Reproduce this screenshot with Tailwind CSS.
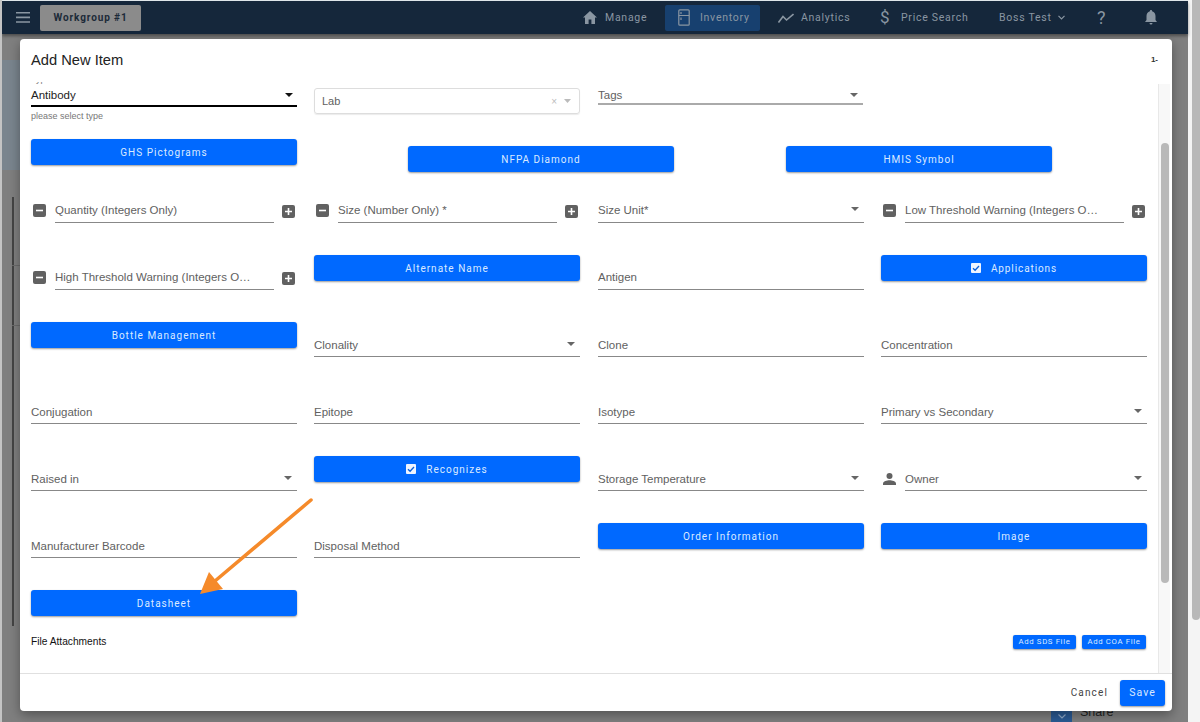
<!DOCTYPE html>
<html lang="en">
<head>
    <meta charset="UTF-8">
    <meta name="viewport" content="width=device-width, initial-scale=1.0">
    <script src="https://cdn.jsdelivr.net/npm/@tailwindcss/browser@4"></script>
    <title>Add New Item</title>
</head>
<body class="relative w-[1200px] h-[722px] overflow-hidden bg-[#f4f4f4] font-['Liberation_Sans',sans-serif]">

    <!-- Page behind the dialog, dimmed by the overlay -->
    <div class="absolute left-0 top-0 w-[1188px] h-[722px] bg-[#7f7f7f] pt-px">
        <nav class="ml-[2px] h-[33px] bg-[#15273b] shadow-[0_2px_3px_rgba(0,0,0,0.4)] flex items-center whitespace-nowrap font-['Roboto',sans-serif] text-[10.500px] tracking-[0.07em] text-[#8a96a2]">
            <svg class="ml-[14px] w-[14px] h-[11px]" viewBox="0 0 14 11"><path d="M0 0h14v1.600H0zM0 4.600h14v1.600H0zM0 9.200h14v1.600H0z" fill="#8a96a2"/></svg>
            <div class="ml-[10px] w-[101px] h-[26px] rounded-[2px] bg-[#8b8b8b] flex items-center justify-center font-bold text-[10px] tracking-[0.09em] text-[#1c2a38]">Workgroup #1</div>
            <svg class="ml-[442px] w-[14px] h-[13px]" viewBox="0 0 14 13"><path d="M7 0L0 6.500h2V13h3.600V8.600h2.800V13H12V6.500h2z" fill="#8a96a2"/></svg>
            <span class="ml-[8px] w-[44px]">Manage</span>
            <div class="ml-[16px] w-[95px] h-[26px] rounded-[2px] bg-[#17406f] flex items-center pl-[13px]">
                <svg class="w-[12px] h-[17px]" viewBox="0 0 12 17" fill="none" stroke="#8a96a2" stroke-width="1.200"><rect x="0.800" y="0.800" width="10.400" height="15.400" rx="1"/><path d="M0.800 6.500h10.400M3 3v2M3 8.500v2.500"/></svg>
                <span class="ml-[10px]">Inventory</span>
            </div>
            <svg class="ml-[18px] w-[16px] h-[10px]" viewBox="0 0 16 10" fill="none" stroke="#8a96a2" stroke-width="1.600"><path d="M0.500 9.500L5 3.500l3.500 3.500L15.500 1"/></svg>
            <span class="ml-[7px] w-[48px]">Analytics</span>
            <span class="ml-[31px] w-[11px] text-[17px] font-normal tracking-normal">$</span>
            <span class="ml-[10px] w-[70px]">Price Search</span>
            <span class="ml-[28px] w-[54px]">Boss Test</span>
            <svg class="ml-[5px] w-[7px] h-[5px]" viewBox="0 0 7 5" fill="none" stroke="#8a96a2" stroke-width="1.200"><path d="M0.500 0.800l3 3 3-3"/></svg>
            <span class="ml-[32px] w-[12px] text-[18px] tracking-normal">?</span>
            <svg class="ml-[36px] w-[12px] h-[15px]" viewBox="0 0 12 15"><path d="M6 0c.7 0 1.100.5 1.100 1.200C9.300 1.800 10.500 3.700 10.500 6v4L12 12H0l1.500-2V6c0-2.300 1.200-4.200 3.400-4.800C4.900.5 5.300 0 6 0zM4.500 13h3a1.500 1.500 0 0 1-3 0z" fill="#8a96a2"/></svg>
        </nav>
        <div class="absolute left-0 top-0 w-full h-px bg-[#dfe6ea]"></div>
        <div class="absolute left-0 top-0 w-[2px] h-[722px] bg-[#c4c4c4]"></div>
        <!-- Table borders showing to the left of the dialog -->
        <div class="absolute left-[12px] top-[197px] w-[2px] h-[429px] bg-[#444]"></div>
        <div class="absolute left-[12px] top-[265px] w-[8px] h-px bg-[#6a6a6a]"></div>
        <div class="absolute left-[12px] top-[325px] w-[8px] h-px bg-[#6a6a6a]"></div>
        <div class="absolute left-[2px] top-[60px] w-[18px] h-[110px] bg-[#7a858e]"></div>
        <div class="absolute left-[1051px] top-[711px] w-[21px] h-[11px] bg-[#2a5a94] flex justify-center pt-[3px]">
            <svg class="w-[8px] h-[5px]" viewBox="0 0 8 5" fill="none" stroke="#8fa9c8" stroke-width="1.200"><path d="M0.500 0.500l3.500 3.500 3.500-3.500"/></svg>
        </div>
        <span class="absolute left-[1080px] top-[703px] text-[12.500px] text-[#222]">Share</span>
    </div>

    <!-- Window scrollbar -->
    <div class="absolute left-[1192px] top-0 w-[8px] h-[620px] bg-[#b8b8b8] rounded-b"></div>

    <!-- Dialog -->
    <div class="absolute left-[20px] top-[39px] w-[1152px] h-[672px] bg-white rounded-[4px] shadow-[0_4px_12px_rgba(0,0,0,0.35)] flex flex-col text-[11.500px] text-[#616161]">
        <div class="h-[43px] pl-[11px] pr-[14px] pt-[12px] flex justify-between">
            <h2 class="text-[14.700px] leading-[18px] text-[#222]">Add New Item</h2>
            <span class="mt-[3px] text-[8px] font-bold text-[#333]">1-</span>
        </div>

        <div class="relative h-[591px] overflow-hidden pl-[11px]">
            <div class="w-[1116px]">
                <!-- First row -->
                <div class="grid grid-cols-[266px_266px_266px_266px] gap-x-[17px] h-[57px]">
                    <div class="relative">
                        <span class="absolute left-0 top-[-9px] text-[9px] leading-[12px] text-[#777]">Type</span>
                        <div class="h-[25px] border-b-2 border-black pt-[6px] leading-[14px] text-[#222]">Antibody</div>
                        <svg class="absolute right-[4px] top-[11px] w-[8px] h-[4px]" viewBox="0 0 8 4"><path d="M0 0h8L4 4z" fill="#111"/></svg>
                        <p class="mt-[3px] text-[9px] leading-[12px] text-[#777]">please select type</p>
                    </div>
                    <div class="mt-[6px] h-[26px] border border-[#ddd] rounded-[3px] shadow-[0_1px_1px_rgba(0,0,0,0.08)] flex items-center pl-[7px] pr-[8px] text-[11px]">
                        <span class="flex-1">Lab</span>
                        <span class="text-[10px] text-[#bbb]">×</span>
                        <svg class="ml-[7px] w-[7px] h-[4px]" viewBox="0 0 7 4"><path d="M0 0h7L3.500 4z" fill="#bbb"/></svg>
                    </div>
                    <div class="relative ml-px">
                        <div class="h-[23px] border-b-2 border-[#aaa] pt-[6px] leading-[14px]">Tags</div>
                        <svg class="absolute right-[5px] top-[11px] w-[8px] h-[4px]" viewBox="0 0 8 4"><path d="M0 0h8L4 4z" fill="#666"/></svg>
                    </div>
                </div>

                <!-- Pictogram buttons -->
                <div class="flex items-start h-[49px]">
                    <button class="w-[266px] h-[26px] rounded-[3px] bg-[#0069ff] shadow-[0_1px_2px_rgba(0,0,0,0.4)] text-[10px] tracking-[0.1em] text-[#dbe9ff] font-['Roboto',sans-serif]">GHS Pictograms</button>
                    <button class="ml-[111px] mt-[7px] w-[266px] h-[26px] rounded-[3px] bg-[#0069ff] shadow-[0_1px_2px_rgba(0,0,0,0.4)] text-[10px] tracking-[0.1em] text-[#dbe9ff] font-['Roboto',sans-serif]">NFPA Diamond</button>
                    <button class="ml-[112px] mt-[7px] w-[266px] h-[26px] rounded-[3px] bg-[#0069ff] shadow-[0_1px_2px_rgba(0,0,0,0.4)] text-[10px] tracking-[0.1em] text-[#dbe9ff] font-['Roboto',sans-serif]">HMIS Symbol</button>
                </div>

                <!-- Fields: columns start at 31, 314, 598 and 881 -->
                <div class="grid grid-cols-[266px_267px_266px_266px] gap-x-[17px] auto-rows-[67px]">
                    <!-- row: Quantity -->
                    <div class="flex items-start">
                        <svg class="mt-[16px] ml-[2px] w-[13px] h-[13px]" viewBox="0 0 13 13"><rect width="13" height="13" rx="2" fill="#616161"/><path d="M3 5.700h7v1.600H3z" fill="#fff"/></svg>
                        <div class="ml-[9px] w-[219px] h-[35px] border-b border-[#888] pt-[14px] leading-[16px]">Quantity (Integers Only)</div>
                        <svg class="mt-[17px] ml-[8px] w-[13px] h-[13px]" viewBox="0 0 13 13"><rect width="13" height="13" rx="2" fill="#616161"/><path d="M3 5.700h7v1.600H3zM5.700 3h1.600v7H5.700z" fill="#fff"/></svg>
                    </div>
                    <div class="flex items-start">
                        <svg class="mt-[16px] ml-[2px] w-[13px] h-[13px]" viewBox="0 0 13 13"><rect width="13" height="13" rx="2" fill="#616161"/><path d="M3 5.700h7v1.600H3z" fill="#fff"/></svg>
                        <div class="ml-[9px] w-[219px] h-[35px] border-b border-[#888] pt-[14px] leading-[16px]">Size (Number Only) *</div>
                        <svg class="mt-[17px] ml-[8px] w-[13px] h-[13px]" viewBox="0 0 13 13"><rect width="13" height="13" rx="2" fill="#616161"/><path d="M3 5.700h7v1.600H3zM5.700 3h1.600v7H5.700z" fill="#fff"/></svg>
                    </div>
                    <div class="relative h-[35px] border-b border-[#888] pt-[14px] leading-[16px]">Size Unit*
                        <svg class="absolute right-[5px] top-[19px] w-[8px] h-[4px]" viewBox="0 0 8 4"><path d="M0 0h8L4 4z" fill="#666"/></svg>
                    </div>
                    <div class="flex items-start">
                        <svg class="mt-[16px] ml-[2px] w-[13px] h-[13px]" viewBox="0 0 13 13"><rect width="13" height="13" rx="2" fill="#616161"/><path d="M3 5.700h7v1.600H3z" fill="#fff"/></svg>
                        <div class="ml-[9px] w-[219px] h-[35px] border-b border-[#888] pt-[14px] leading-[16px]">Low Threshold Warning (Integers O…</div>
                        <svg class="mt-[17px] ml-[8px] w-[13px] h-[13px]" viewBox="0 0 13 13"><rect width="13" height="13" rx="2" fill="#616161"/><path d="M3 5.700h7v1.600H3zM5.700 3h1.600v7H5.700z" fill="#fff"/></svg>
                    </div>

                    <!-- row: High Threshold -->
                    <div class="flex items-start">
                        <svg class="mt-[16px] ml-[2px] w-[13px] h-[13px]" viewBox="0 0 13 13"><rect width="13" height="13" rx="2" fill="#616161"/><path d="M3 5.700h7v1.600H3z" fill="#fff"/></svg>
                        <div class="ml-[9px] w-[219px] h-[35px] border-b border-[#888] pt-[14px] leading-[16px]">High Threshold Warning (Integers O…</div>
                        <svg class="mt-[17px] ml-[8px] w-[13px] h-[13px]" viewBox="0 0 13 13"><rect width="13" height="13" rx="2" fill="#616161"/><path d="M3 5.700h7v1.600H3zM5.700 3h1.600v7H5.700z" fill="#fff"/></svg>
                    </div>
                    <button class="w-[266px] h-[26px] rounded-[3px] bg-[#0069ff] shadow-[0_1px_2px_rgba(0,0,0,0.4)] text-[10px] tracking-[0.1em] text-[#dbe9ff] font-['Roboto',sans-serif]">Alternate Name</button>
                    <div class="h-[35px] border-b border-[#888] pt-[14px] leading-[16px]">Antigen</div>
                    <button class="h-[26px] rounded-[3px] bg-[#0069ff] shadow-[0_1px_2px_rgba(0,0,0,0.4)] text-[10px] tracking-[0.09em] text-[#dbe9ff] font-['Roboto',sans-serif] flex items-center justify-center gap-[10px]">
                        <svg class="w-[10px] h-[10px]" viewBox="0 0 10 10"><rect width="10" height="10" rx="1" fill="#eef4ff"/><path d="M2 5.200l2.100 2.100L8 3" fill="none" stroke="#0a5fd8" stroke-width="1.300"/></svg>
                        Applications
                    </button>

                    <!-- row: Bottle Management -->
                    <button class="h-[26px] rounded-[3px] bg-[#0069ff] shadow-[0_1px_2px_rgba(0,0,0,0.4)] text-[10px] tracking-[0.1em] text-[#dbe9ff] font-['Roboto',sans-serif]">Bottle Management</button>
                    <div class="relative w-[266px] h-[35px] border-b border-[#888] pt-[15px] leading-[16px]">Clonality
                        <svg class="absolute right-[5px] top-[20px] w-[8px] h-[4px]" viewBox="0 0 8 4"><path d="M0 0h8L4 4z" fill="#666"/></svg>
                    </div>
                    <div class="h-[35px] border-b border-[#888] pt-[15px] leading-[16px]">Clone</div>
                    <div class="h-[35px] border-b border-[#888] pt-[15px] leading-[16px]">Concentration</div>

                    <!-- row: Conjugation -->
                    <div class="h-[35px] border-b border-[#888] pt-[15px] leading-[16px]">Conjugation</div>
                    <div class="w-[266px] h-[35px] border-b border-[#888] pt-[15px] leading-[16px]">Epitope</div>
                    <div class="h-[35px] border-b border-[#888] pt-[15px] leading-[16px]">Isotype</div>
                    <div class="relative h-[35px] border-b border-[#888] pt-[15px] leading-[16px]">Primary vs Secondary
                        <svg class="absolute right-[5px] top-[20px] w-[8px] h-[4px]" viewBox="0 0 8 4"><path d="M0 0h8L4 4z" fill="#666"/></svg>
                    </div>

                    <!-- row: Raised in -->
                    <div class="relative h-[35px] border-b border-[#888] pt-[15px] leading-[16px]">Raised in
                        <svg class="absolute right-[5px] top-[20px] w-[8px] h-[4px]" viewBox="0 0 8 4"><path d="M0 0h8L4 4z" fill="#666"/></svg>
                    </div>
                    <button class="w-[266px] h-[26px] rounded-[3px] bg-[#0069ff] shadow-[0_1px_2px_rgba(0,0,0,0.4)] text-[10px] tracking-[0.1em] text-[#dbe9ff] font-['Roboto',sans-serif] flex items-center justify-center gap-[10px]">
                        <svg class="w-[10px] h-[10px]" viewBox="0 0 10 10"><rect width="10" height="10" rx="1" fill="#eef4ff"/><path d="M2 5.200l2.100 2.100L8 3" fill="none" stroke="#0a5fd8" stroke-width="1.300"/></svg>
                        Recognizes
                    </button>
                    <div class="relative h-[35px] border-b border-[#888] pt-[15px] leading-[16px]">Storage Temperature
                        <svg class="absolute right-[5px] top-[20px] w-[8px] h-[4px]" viewBox="0 0 8 4"><path d="M0 0h8L4 4z" fill="#666"/></svg>
                    </div>
                    <div class="flex items-start">
                        <svg class="mt-[17px] ml-[2px] w-[13px] h-[12px]" viewBox="0 0 13 12"><circle cx="6.500" cy="3" r="3" fill="#616161"/><path d="M0 12v-1.500C0 8.500 4 7.300 6.500 7.300S13 8.500 13 10.500V12z" fill="#616161"/></svg>
                        <div class="relative ml-[9px] flex-1 h-[35px] border-b border-[#888] pt-[15px] leading-[16px]">Owner
                            <svg class="absolute right-[5px] top-[20px] w-[8px] h-[4px]" viewBox="0 0 8 4"><path d="M0 0h8L4 4z" fill="#666"/></svg>
                        </div>
                    </div>

                    <!-- row: Manufacturer Barcode -->
                    <div class="h-[35px] border-b border-[#888] pt-[15px] leading-[16px]">Manufacturer Barcode</div>
                    <div class="w-[266px] h-[35px] border-b border-[#888] pt-[15px] leading-[16px]">Disposal Method</div>
                    <button class="h-[26px] rounded-[3px] bg-[#0069ff] shadow-[0_1px_2px_rgba(0,0,0,0.4)] text-[10px] tracking-[0.1em] text-[#dbe9ff] font-['Roboto',sans-serif]">Order Information</button>
                    <button class="h-[26px] rounded-[3px] bg-[#0069ff] shadow-[0_1px_2px_rgba(0,0,0,0.4)] text-[10px] tracking-[0.1em] text-[#dbe9ff] font-['Roboto',sans-serif]">Image</button>

                    <!-- row: Datasheet -->
                    <button class="h-[26px] rounded-[3px] bg-[#0069ff] shadow-[0_1px_2px_rgba(0,0,0,0.4)] text-[10px] tracking-[0.1em] text-[#dbe9ff] font-['Roboto',sans-serif]">Datasheet</button>
                </div>

                <!-- File attachments -->
                <div class="mt-[-23px] flex items-center justify-between h-[16px] pr-[1px]">
                    <span class="text-[10.200px] text-[#111]">File Attachments</span>
                    <div class="flex gap-[6px]">
                        <button class="w-[63px] h-[14px] rounded-[2px] bg-[#0069ff] shadow-[0_1px_2px_rgba(0,0,0,0.4)] text-[7.800px] tracking-[0.08em] text-[#dbe9ff] font-['Roboto',sans-serif]">Add SDS File</button>
                        <button class="w-[64px] h-[14px] rounded-[2px] bg-[#0069ff] shadow-[0_1px_2px_rgba(0,0,0,0.4)] text-[7.800px] tracking-[0.08em] text-[#dbe9ff] font-['Roboto',sans-serif]">Add COA File</button>
                    </div>
                </div>
            </div>

            <!-- Dialog scrollbar -->
            <div class="absolute right-[2px] top-[2px] bottom-0 w-[12px] bg-[#f8f8f8] border-l border-[#e8e8e8]">
                <div class="absolute left-[2px] top-[59px] w-[8px] h-[440px] rounded bg-[#b9b9b9]"></div>
            </div>
        </div>

        <div class="flex-1 border-t border-[#e0e0e0] flex items-center justify-end pr-[7px] font-['Roboto',sans-serif] tracking-[0.1em]">
            <span class="text-[10px] text-[#444]">Cancel</span>
            <button class="ml-[12px] w-[45px] h-[26px] rounded-[3px] bg-[#0069ff] shadow-[0_1px_2px_rgba(0,0,0,0.4)] text-[10.500px] tracking-[0.1em] text-[#dbe9ff]">Save</button>
        </div>
    </div>

    <!-- Orange annotation arrow -->
    <svg class="absolute left-0 top-0 w-[1200px] h-[722px] pointer-events-none" viewBox="0 0 1200 722">
        <path d="M311 500L215 581" stroke="#f58a2a" stroke-width="3.500" stroke-linecap="round" fill="none"/>
        <path d="M200 594L209 572L223 589z" fill="#f58a2a"/>
    </svg>
</body>
</html>
